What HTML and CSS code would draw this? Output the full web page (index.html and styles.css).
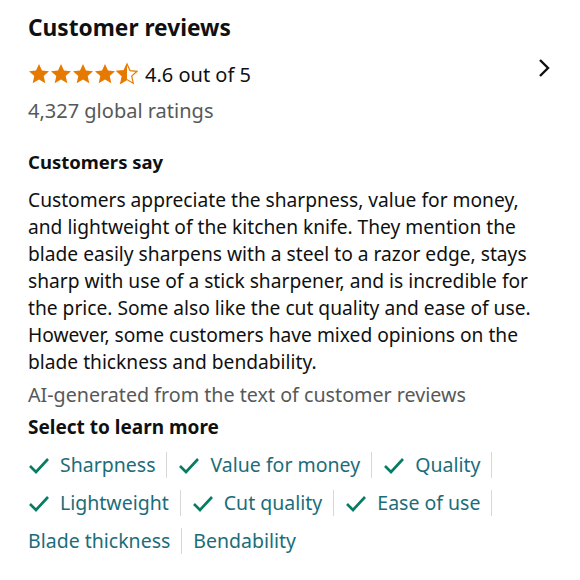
FILE: index.html
```html
<!DOCTYPE html>
<html lang="en">
<head>
    <meta charset="UTF-8">
    <meta name="viewport" content="width=device-width, initial-scale=1.0">
    <title>Customer reviews</title>
    <link rel="stylesheet" href="styles.css">
</head>
<body>

<div class="reviews">
    <h1>Customer reviews</h1>

    <!-- rating row -->
    <div class="rating-row">
        <div class="stars">
            <svg width="110" height="24" viewBox="0 0 110 22">
                <defs>
                    <path id="star" d="M11 1l3 6.6 7 .7-5.3 4.8 1.6 7.1L11 16.6 4.7 20.2l1.6-7.1L1 8.3l7-.7z"/>
                    <linearGradient id="half">
                        <stop offset="50%" stop-color="#e67a00"/>
                        <stop offset="50%" stop-color="#fff"/>
                    </linearGradient>
                </defs>
                <use href="#star" x="0" fill="#e67a00"/>
                <use href="#star" x="22" fill="#e67a00"/>
                <use href="#star" x="44" fill="#e67a00"/>
                <use href="#star" x="66" fill="#e67a00"/>
                <use href="#star" x="88" fill="url(#half)" stroke="#e67a00" stroke-width="1.2"/>
            </svg>
            <span class="rating-text">4.6 out of 5</span>
        </div>
        <svg class="chevron" width="16" height="22" viewBox="0 0 16 22">
            <path d="M4 3l8 8-8 8" fill="none" stroke="#0f1111" stroke-width="2.4"/>
        </svg>
    </div>
    <p class="global">4,327 global ratings</p>

    <h2>Customers say</h2>
    <p class="summary">Customers appreciate the sharpness, value for money, and lightweight of the kitchen knife. They mention the blade easily sharpens with a steel to a razor edge, stays sharp with use of a stick sharpener, and is incredible for the price. Some also like the cut quality and ease of use. However, some customers have mixed opinions on the blade thickness and bendability.</p>
    <p class="ai-note">AI-generated from the text of customer reviews</p>

    <h3>Select to learn more</h3>
    <ul class="aspects">
        <li class="positive">Sharpness</li>
        <li class="positive">Value for money</li>
        <li class="positive">Quality</li>
        <li class="positive">Lightweight</li>
        <li class="positive">Cut quality</li>
        <li class="positive">Ease of use</li>
        <li>Blade thickness</li>
        <li>Bendability</li>
    </ul>
</div>

</body>
</html>
```

FILE: styles.css
```css
body {
    font-family: "Noto Sans", Arial, sans-serif;
    background-color: #fff;
    color: #0f1111;
    margin: 0;
    padding: 13px 27px 0 28px;
}

h1 {
    font-size: 22.7px;
    font-weight: bold;
    margin: 0;
    line-height: 30px;
}

.rating-row {
    display: flex;
    justify-content: space-between;
    align-items: center;
    margin-top: 18px;
    height: 26px;
}

.stars {
    display: flex;
    align-items: center;
}

.rating-text {
    font-size: 20px;
    margin-left: 7px;
}

.chevron {
    margin-right: 1px;
    margin-top: -12px;
}

.global {
    color: #565959;
    font-size: 20px;
    line-height: 27px;
    margin: 10px 0 0;
}

h2 {
    font-size: 18.5px;
    font-weight: bold;
    line-height: 25px;
    margin: 25px 0 0;
}

.summary {
    font-size: 19.2px;
    line-height: 27px;
    max-width: 510px;
    margin: 12px 0 0;
}

.ai-note {
    color: #565959;
    font-size: 19.7px;
    line-height: 27px;
    margin: 6px 0 0;
}

h3 {
    font-size: 19px;
    font-weight: bold;
    line-height: 26px;
    margin: 6px 0 0;
}

.aspects {
    list-style: none;
    padding: 0;
    margin: 12px 0 0;
    display: flex;
    flex-wrap: wrap;
    row-gap: 12px;
}

.aspects li {
    color: #1b6d7a;
    font-size: 19.5px;
    line-height: 26px;
    padding-right: 11px;
    margin-right: 11px;
    border-right: 1px solid #d5d9d9;
    display: flex;
    align-items: center;
}

.aspects li:last-child {
    border-right: none;
}

.aspects li.positive::before {
    content: "";
    width: 22px;
    height: 22px;
    margin-right: 10px;
    background: url("data:image/svg+xml;utf8,<svg xmlns='http://www.w3.org/2000/svg' viewBox='0 0 22 22'><path d='M2 12l6 6L20 5' fill='none' stroke='%23067d62' stroke-width='2.6'/></svg>") no-repeat center;
}
```
